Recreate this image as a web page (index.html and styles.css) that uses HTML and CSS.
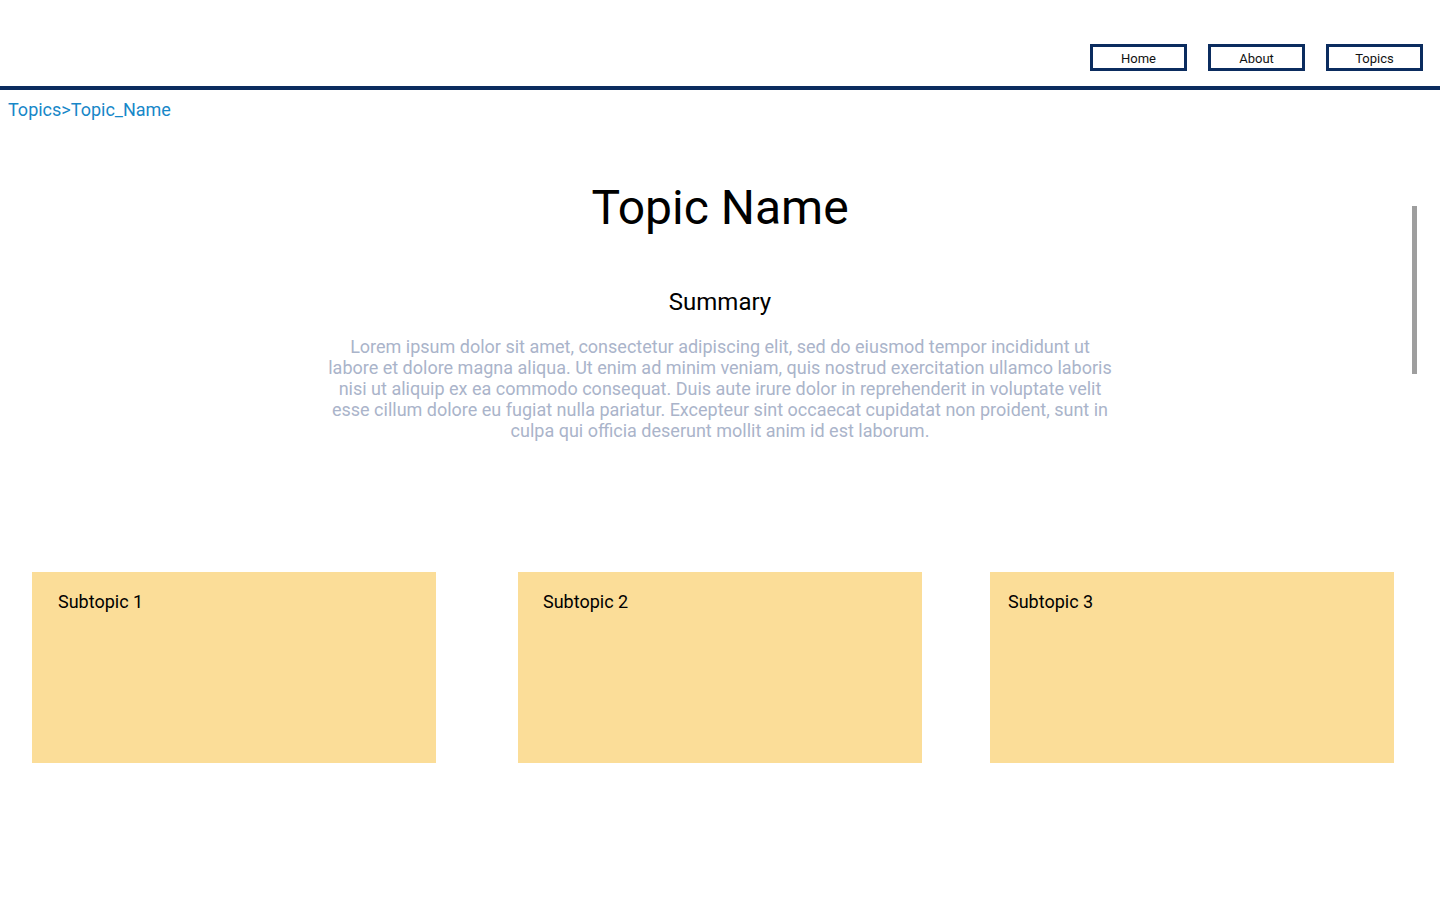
FILE: index.html
```html
<!DOCTYPE html>
<html lang="en">
<head>
<meta charset="utf-8">
<title>Topic Name</title>
<link rel="stylesheet" href="styles.css">
</head>
<body>
<header class="site-header">
  <nav class="nav">
    <a class="nav-btn" href="#">Home</a>
    <a class="nav-btn" href="#">About</a>
    <a class="nav-btn" href="#">Topics</a>
  </nav>
</header>
<div class="breadcrumb"><a href="#">Topics</a>&gt;<a href="#">Topic_Name</a></div>
<main class="main">
  <h1 class="title">Topic Name</h1>
  <h2 class="summary-title">Summary</h2>
  <p class="summary">Lorem ipsum dolor sit amet, consectetur adipiscing elit, sed do eiusmod tempor incididunt ut labore et dolore magna aliqua. Ut enim ad minim veniam, quis nostrud exercitation ullamco laboris nisi ut aliquip ex ea commodo consequat. Duis aute irure dolor in reprehenderit in voluptate velit esse cillum dolore eu fugiat nulla pariatur. Excepteur sint occaecat cupidatat non proident, sunt in culpa qui officia deserunt mollit anim id est laborum.</p>
  <section class="cards">
    <div class="card card-1"><span class="card-title">Subtopic 1</span></div>
    <div class="card card-2"><span class="card-title">Subtopic 2</span></div>
    <div class="card card-3"><span class="card-title">Subtopic 3</span></div>
  </section>
</main>
<div class="scroll-thumb"></div>
</body>
</html>
```
FILE: styles.css
```css
* { box-sizing: border-box; }
html, body {
  margin: 0;
  padding: 0;
  background: #ffffff;
  font-family: Roboto, "Liberation Sans", Arial, sans-serif;
  color: #000;
}
.site-header {
  border-bottom: 4px solid #0b2c5f;
  height: 90px;
  padding: 44px 17px 0 0;
}
.nav {
  display: flex;
  justify-content: flex-end;
  gap: 21px;
}
.nav-btn {
  display: flex;
  align-items: center;
  justify-content: center;
  width: 97px;
  height: 27px;
  border: 3px solid #0b2c5f;
  color: #111;
  font-size: 13px;
  text-decoration: none;
  padding-top: 1px;
}
.breadcrumb {
  padding: 9px 0 0 8px;
  font-size: 18px;
  line-height: 22px;
  color: #1787c8;
}
.breadcrumb a {
  color: #1787c8;
  text-decoration: none;
}
.main {
  display: flex;
  flex-direction: column;
  align-items: center;
}
.title {
  margin: 57px 0 0;
  font-size: 48px;
  font-weight: 400;
  line-height: 60px;
}
.summary-title {
  margin: 49px 0 0;
  font-size: 24px;
  font-weight: 400;
  line-height: 30px;
}
.summary {
  margin: 19px 0 0;
  width: 790px;
  text-align: center;
  font-size: 18px;
  line-height: 21px;
  color: #aab4ca;
}
.cards {
  align-self: stretch;
  display: flex;
  margin-top: 131px;
  padding-left: 32px;
}
.card {
  width: 404px;
  height: 191px;
  background: #fbdd98;
  padding-top: 19px;
}
.card-1 { padding-left: 26px; }
.card-2 { margin-left: 82px; padding-left: 25px; }
.card-3 { margin-left: 68px; padding-left: 18px; }
.card-title {
  font-size: 18px;
  line-height: 22px;
}
.scroll-thumb {
  position: absolute;
  left: 1412px;
  top: 206px;
  width: 5px;
  height: 168px;
  background: #9e9e9e;
}
```
